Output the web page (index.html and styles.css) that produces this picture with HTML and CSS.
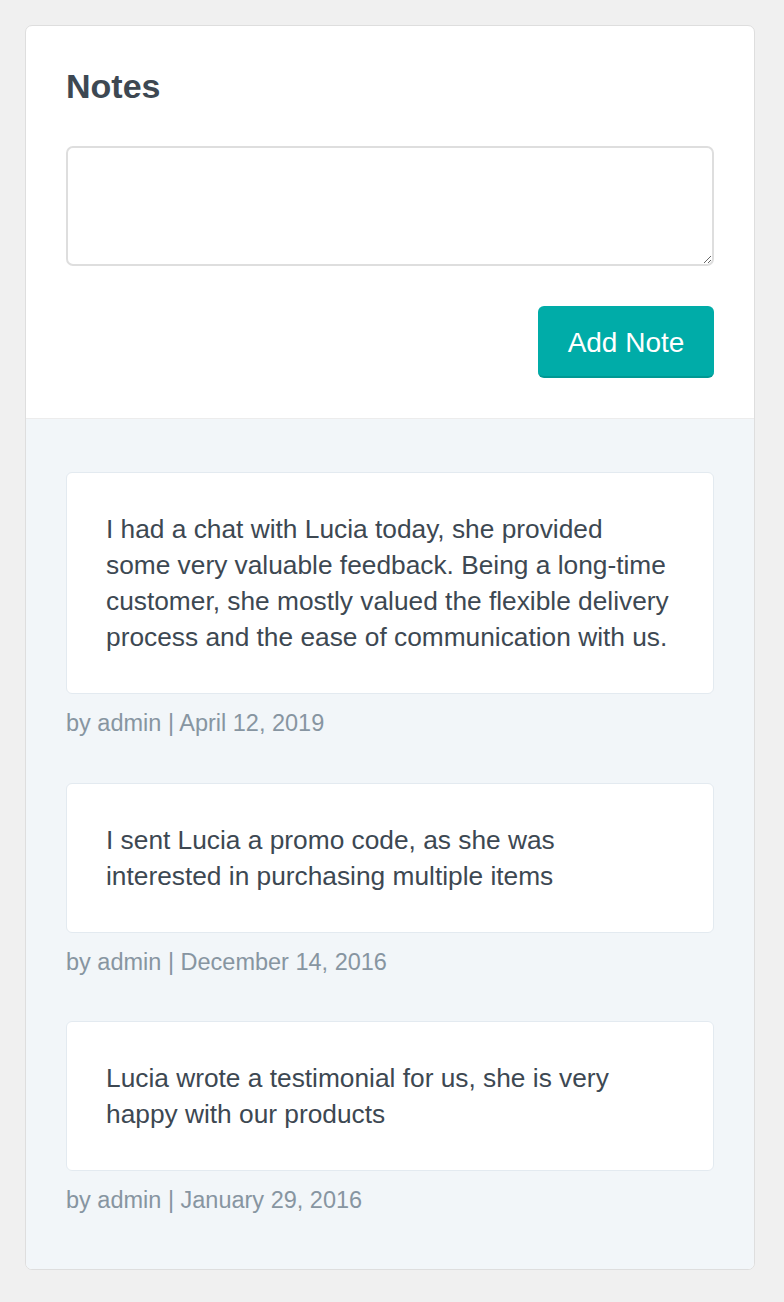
FILE: index.html
```html
<!DOCTYPE html>
<html>
<head>
<meta charset="utf-8">
<link rel="stylesheet" href="styles.css">
</head>
<body>
<div class="card">
  <div class="card-top">
    <h2 class="title">Notes</h2>
    <textarea class="note-input"></textarea>
    <div class="actions">
      <button class="btn">Add Note</button>
    </div>
  </div>
  <div class="card-bottom">
    <div class="note">
      <div class="note-body">I had a chat with Lucia today, she provided some very valuable feedback. Being a long-time customer, she mostly valued the flexible delivery process and the ease of communication with us.</div>
      <div class="note-meta">by admin | April 12, 2019</div>
    </div>
    <div class="note">
      <div class="note-body">I sent Lucia a promo code, as she was interested in purchasing multiple items</div>
      <div class="note-meta">by admin | December 14, 2016</div>
    </div>
    <div class="note">
      <div class="note-body">Lucia wrote a testimonial for us, she is very happy with our products</div>
      <div class="note-meta">by admin | January 29, 2016</div>
    </div>
  </div>
</div>
</body>
</html>
```

FILE: styles.css
```css
* { box-sizing: border-box; }
html, body { margin: 0; padding: 0; }
body {
  background: #f0f0f0;
  font-family: "Liberation Sans", Arial, sans-serif;
  color: #3d4852;
  padding: 25px 0 32px 25px;
}
.card {
  width: 730px;
  background: #fff;
  border: 1px solid #dedede;
  border-radius: 7px;
  overflow: hidden;
}
.card-top {
  padding: 40px 40px 40px 40px;
  border-bottom: 1px solid #ececec;
}
.title {
  margin: 0;
  font-size: 34px;
  line-height: 40px;
  font-weight: 700;
  color: #3d4852;
}
.note-input {
  display: block;
  margin-top: 40px;
  width: 648px;
  height: 120px;
  border: 2px solid #dedede;
  border-radius: 7px;
  resize: vertical;
  font: inherit;
  padding: 8px;
}
.actions {
  display: flex;
  justify-content: flex-end;
  margin-top: 40px;
}
.btn {
  width: 176px;
  height: 72px;
  background: #00aca8;
  border: none;
  border-bottom: 2px solid #009893;
  border-radius: 6px;
  color: #fff;
  font-family: "Liberation Sans", Arial, sans-serif;
  font-size: 28px;
  padding: 4px 0 0 0;
}
.card-bottom {
  background: #f2f6f9;
  padding: 53px 40px 53px 40px;
  display: flex;
  flex-direction: column;
  gap: 43.5px;
}
.note-body {
  background: #fff;
  border: 1px solid #e3eaf0;
  border-radius: 6px;
  padding: 38px 42px 38px 39px;
  font-size: 26.3px;
  line-height: 36px;
  color: #3d4852;
}
.note-meta {
  margin-top: 13px;
  font-size: 23.5px;
  line-height: 32px;
  color: #8795a1;
}
```
